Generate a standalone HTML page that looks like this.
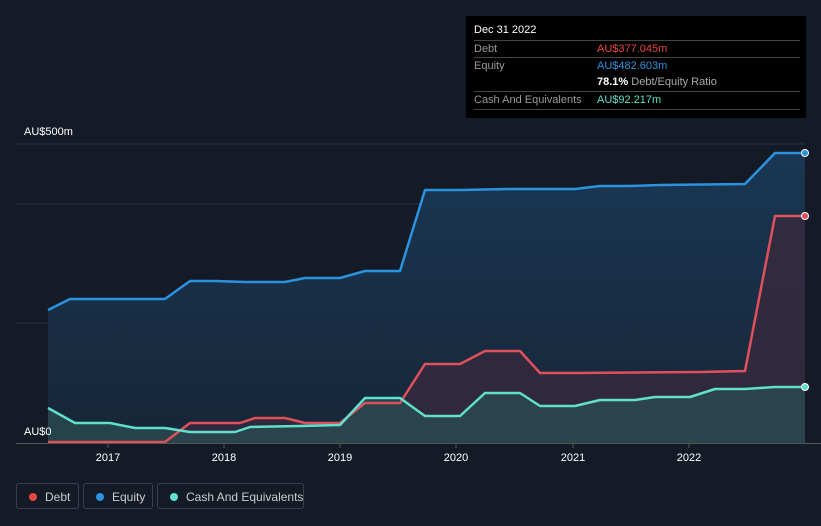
<!DOCTYPE html>
<html><head><style>
html,body{margin:0;width:821px;height:526px;overflow:hidden}
body{background:#151b26;font-family:"Liberation Sans",sans-serif;position:relative}
.tt{position:absolute;left:466px;top:16px;width:340px;height:102px;background:#000;color:#fff;font-size:11px}
.tt .r{position:absolute;left:8px;width:326px;border-top:1px solid #444;height:17px;line-height:17px;color:#999;white-space:nowrap}
.tt .v{position:absolute;left:123px}
.leg{position:absolute;top:483px;height:26px;border:1px solid #3a404b;border-radius:3px;color:#ccc;font-size:12px;line-height:26px;box-sizing:border-box;white-space:nowrap}
.leg i{position:absolute;left:12px;top:9px;width:8px;height:8px;border-radius:50%}
</style></head><body>
<svg width="821" height="526" style="position:absolute;left:0;top:0">
<defs>
<linearGradient id="ge" x1="0" y1="0" x2="0" y2="1"><stop offset="0" stop-color="#1a3a58"/><stop offset="1" stop-color="#17273a"/></linearGradient>
</defs>
<g stroke="#2c323d" stroke-width="1"><line x1="16" y1="144" x2="805" y2="144"/><line x1="16" y1="204" x2="805" y2="204"/><line x1="16" y1="323" x2="805" y2="323"/></g>
<path d="M48,310 L70,299 L165,299 L190,281 L215,281 L245,282 L285,282 L305,278 L340,278 L365,271 L400,271 L425,190 L460,190 L510,189 L575,189 L600,186 L630,186 L660,185 L745,184 L775,153 L805,153 L805,443 L48,443Z" fill="url(#ge)" opacity="0.9"/>
<path d="M48,442 L165,442 L190,423 L240,423 L255,418 L285,418 L305,423 L340,423 L365,403 L400,403 L425,364 L460,364 L485,351 L520,351 L540,373 L575,373 L700,372 L745,371 L775,216 L805,216 L805,443 L48,443Z" fill="#3a2a3e" opacity="0.75"/>
<path d="M48,408 L75,423 L110,423 L135,428 L165,428 L190,432 L235,432 L250,427 L300,426 L340,425 L365,398 L400,398 L425,416 L460,416 L485,393 L520,393 L540,406 L575,406 L600,400 L635,400 L655,397 L690,397 L715,389 L745,389 L775,387 L805,387 L805,443 L48,443Z" fill="#2a4a50" opacity="0.8"/>
<g fill="none" stroke-width="2.5" stroke-linejoin="round">
<path d="M48,310 L70,299 L165,299 L190,281 L215,281 L245,282 L285,282 L305,278 L340,278 L365,271 L400,271 L425,190 L460,190 L510,189 L575,189 L600,186 L630,186 L660,185 L745,184 L775,153 L805,153" stroke="#2a93e0"/>
<path d="M48,442 L165,442 L190,423 L240,423 L255,418 L285,418 L305,423 L340,423 L365,403 L400,403 L425,364 L460,364 L485,351 L520,351 L540,373 L575,373 L700,372 L745,371 L775,216 L805,216" stroke="#e0505a"/>
<path d="M48,408 L75,423 L110,423 L135,428 L165,428 L190,432 L235,432 L250,427 L300,426 L340,425 L365,398 L400,398 L425,416 L460,416 L485,393 L520,393 L540,406 L575,406 L600,400 L635,400 L655,397 L690,397 L715,389 L745,389 L775,387 L805,387" stroke="#5fe0cc"/>
</g>
<circle cx="805" cy="153" r="3.5" fill="#2a93e0" stroke="#fff"/><circle cx="805" cy="216" r="3.5" fill="#e0505a" stroke="#fff"/><circle cx="805" cy="387" r="3.5" fill="#5fe0cc" stroke="#fff"/>
<line x1="16" y1="443.5" x2="821" y2="443.5" stroke="#555"/>
<g stroke="#555"><line x1="108" y1="443" x2="108" y2="448"/><line x1="224" y1="443" x2="224" y2="448"/><line x1="340" y1="443" x2="340" y2="448"/><line x1="456" y1="443" x2="456" y2="448"/><line x1="573" y1="443" x2="573" y2="448"/><line x1="689" y1="443" x2="689" y2="448"/></g>
<g fill="#fff" font-size="11" text-anchor="middle" font-family="Liberation Sans"><text x="108" y="461">2017</text><text x="224" y="461">2018</text><text x="340" y="461">2019</text><text x="456" y="461">2020</text><text x="573" y="461">2021</text><text x="689" y="461">2022</text></g>
<text x="24" y="135" fill="#fff" font-size="11" font-family="Liberation Sans">AU$500m</text>
<text x="24" y="435" fill="#fff" font-size="11" font-family="Liberation Sans">AU$0</text>
</svg>
<div class="tt">
<div style="position:absolute;left:8px;top:8px;font-size:11px">Dec 31 2022</div>
<div class="r" style="top:24px">Debt<span class="v" style="color:#e84545">AU$377.045m</span></div>
<div class="r" style="top:41px">Equity<span class="v" style="color:#2a93e0">AU$482.603m</span></div>
<div class="r" style="top:58px;border-top:none"><span class="v" style="color:#aaa"><b style="color:#fff;font-weight:bold">78.1%</b> Debt/Equity Ratio</span></div>
<div class="r" style="top:75px">Cash And Equivalents<span class="v" style="color:#5fe0cc">AU$92.217m</span></div>
<div class="r" style="top:93px;height:0"></div>
</div>
<div class="leg" style="left:16px;width:63px"><i style="background:#e84545"></i><span style="position:absolute;left:28px">Debt</span></div>
<div class="leg" style="left:83px;width:70px"><i style="background:#2a93e0"></i><span style="position:absolute;left:28px">Equity</span></div>
<div class="leg" style="left:157px;width:147px"><i style="background:#5fe0cc"></i><span style="position:absolute;left:28px">Cash And Equivalents</span></div>
</body></html>
